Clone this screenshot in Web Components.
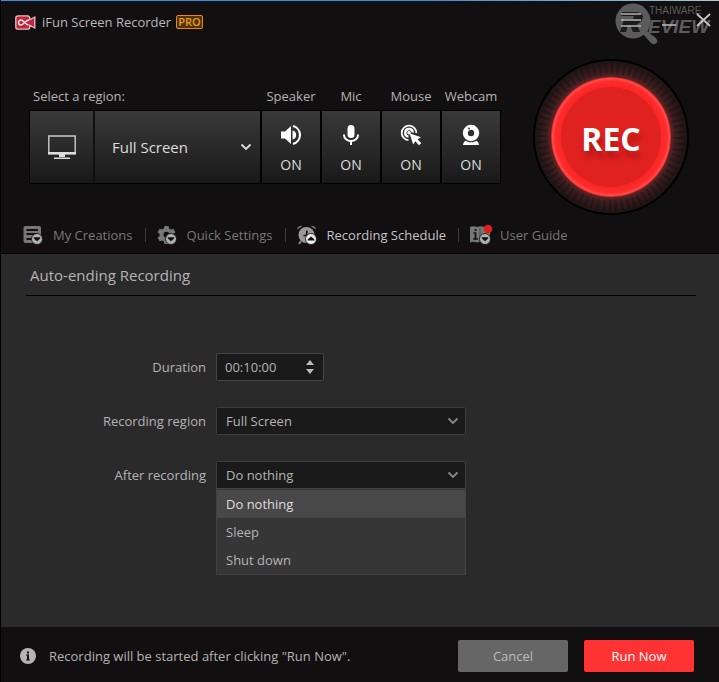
<!DOCTYPE html>
<html lang="en">
<head>
<meta charset="utf-8">
<meta name="viewport" content="width=device-width, initial-scale=1">
<title>iFun Screen Recorder</title>
<style>
  html, body { margin: 0; background: #110f10; }
  body { font: 14px/20px "Open Sans", "Noto Sans", sans-serif; color: #b4b4b4; }
</style>
</head>
<body>
<recorder-app></recorder-app>

<script>
const define = (name, html, setup) => {
  const template = document.createElement('template');
  template.innerHTML = `<style>
    *, *::before, *::after { box-sizing: border-box; }
    :host { box-sizing: border-box; }
    button, select, input { font: inherit; color: inherit; margin: 0; padding: 0; border: 0; background: none; border-radius: 0; }
    select { appearance: none; }
    svg { display: block; flex: none; overflow: visible; }
  </style>` + html;
  customElements.define(name, class extends HTMLElement {
    connectedCallback() {
      if (this.shadowRoot) return;
      this.attachShadow({ mode: 'open' }).append(template.content.cloneNode(true));
      if (setup) setup(this, this.shadowRoot);
    }
  });
};

const badge = (fill, direction) => `<circle cx="14" cy="14" r="5.500" fill="${fill}" stroke="#110f10" stroke-width=".8"/>` +
  (direction === 'up' ? '<path d="M10.500 15.500h7q-.5-2-3.500-4-3 2-3.500 4z" fill="#110f10"/>' : '<path d="M10.500 12.300h7q-.3 2.200-3.500 3.900-3.200-1.700-3.500-3.900z" fill="#110f10"/>');

const icons = {
  speaker: '<svg width="22" height="22" viewBox="0 0 22 22" fill="#fff"><path d="M1 7.500h4L11 2v18l-6-5.500H1zM12.500 6.500v9a4.600 4.600 0 0 0 0-9z"/><path d="M13 2a9.300 9.300 0 0 1 0 18" fill="none" stroke="#fff" stroke-width="2.200"/></svg>',
  mic: '<svg width="22" height="22" viewBox="0 0 22 22"><rect x="7.500" y="1" width="7" height="13" rx="3.500" fill="#fff"/><path d="M4 10.500v.5a7 6 0 0 0 14 0v-.5M11 17v4" fill="none" stroke="#fff" stroke-width="2"/></svg>',
  mouse: '<svg width="22" height="22" viewBox="0 0 22 22"><g fill="none" stroke="#fff"><path d="M8.500 16.200A7.300 7.300 0 1 1 16.300 9" stroke-width="1.800"/><path d="M8.500 12.600A3.800 3.800 0 1 1 12.800 8.500" stroke-width="2.400"/></g><circle cx="9" cy="8.800" r="1.800" fill="#fff"/><path d="M9.500 9.200l11.500 4-3.300 2 3.600 4-2.300 2-3.700-4-2.100 3.200z" fill="#fff"/></svg>',
  webcam: '<svg width="22" height="22" viewBox="0 0 22 22"><circle cx="11" cy="9" r="5.700" fill="none" stroke="#fff" stroke-width="5"/><circle cx="9" cy="4.500" r=".9" fill="#262626"/><path d="M3 21c.2-2.500 1.200-3.600 2.800-4.300 3 2 7.400 2 10.400 0 1.600.7 2.600 1.800 2.800 4.300z" fill="#fff"/></svg>',
  list: `<svg width="20" height="20" viewBox="0 0 20 20"><path d="M2.500 1h13.500q2 0 2 2v13q0 2-2 2H2.500q-2 0-2-2V3q0-2 2-2z" fill="#777"/><path d="M3.500 5h11.500M3.500 9h11.500M3.500 14h5" stroke="#110f10" stroke-width="1.800"/>${badge('#b0b0b0', 'down')}</svg>`,
  gear: `<svg width="20" height="20" viewBox="0 0 20 20"><path d="M7.500 1h4l.6 2.600 1.800 1 2.500-.8 2 3.400-2 1.800v2l2 1.800-2 3.400-2.500-.8-1.800 1-.6 2.600h-4l-.6-2.600-1.800-1-2.500.8-2-3.400L2.600 11V9L.6 7.200l2-3.400 2.500.8 1.800-1z" fill="#777"/><circle cx="9.500" cy="9.800" r="3" fill="#110f10"/>${badge('#b0b0b0', 'down')}</svg>`,
  clock: `<svg width="20" height="20" viewBox="0 0 20 20"><path d="M4 16l-2 3" stroke="#888" stroke-width="2"/><path d="M0 4.500Q.5.800 5.500.8L3 2.500zM13.500.8q5 0 5.500 3.700L16 2.500z" fill="#888"/><circle cx="9.500" cy="10" r="8" fill="#999"/><path d="M9.800 5.500v5H6.500" fill="none" stroke="#110f10" stroke-width="1.600"/>${badge('#ececec', 'up')}</svg>`,
  guide: `<svg width="20" height="20" viewBox="0 0 20 20"><path d="M0 2q3.500-1.500 7 0 3.500-1.500 7 0 3-1.200 6 0v15.500q-3-1-6 0-3.500-1.500-7 0-3.500-1.500-7 0z" fill="#777"/><path d="M3.500 8h2v6M3 14h5M5.500 4v2" fill="none" stroke="#110f10" stroke-width="1.700"/><path d="M10 2.500v14" stroke="#4a4a4a"/><g transform="translate(1 0)">${badge('#b0b0b0', 'down')}</g><circle cx="18" cy="4" r="4.300" fill="#e0201f"/></svg>`
};

const chevron = '<svg class="chevron" width="12" height="8" viewBox="0 0 12 8" fill="none" stroke="currentColor" stroke-width="1.800"><path d="M1.500 1.500L6 6l4.500-4.500"/></svg>';

define('title-bar', `
  <style>
    :host { display: flex; align-items: center; height: 42px; padding: 0 8px 0 14px; position: relative; }
    h1 { margin: 0 5px 0 6px; font-size: 13px; font-weight: 400; line-height: 20px; color: #b8b8b8; }
    .pro { padding: 0 1px; border: 1px solid #f08418; border-radius: 2px; background: #4c3309; color: #f59a14; font-size: 11px; font-weight: 600; line-height: 12px; }
    .tools { display: flex; align-items: center; gap: 21px; margin-left: auto; z-index: 1; }
    .tools button { display: grid; place-items: center; height: 22px; }
    .mark { position: absolute; top: 0; right: 0; pointer-events: none; }
  </style>
  <svg width="21" height="15" viewBox="0 0 21 15"><path d="M3 .8h9.500q2.200 0 2.200 2.400v1.500L19.800 2v11l-5.100-2.700V12q0 2.200-2.200 2.200H3q-2.200 0-2.200-2.200V3Q.8.800 3 .8z" fill="#c92238" stroke="#d8c4c8" stroke-width="1.300"/><path d="M13.500 10C9.500 9.500 9 5 6 5a2.500 2.500 0 0 0 0 5c3 0 4-5 8-5" fill="none" stroke="#eee" stroke-width="1.400"/></svg>
  <h1>iFun Screen Recorder</h1><span class="pro">PRO</span>
  <svg class="mark" width="105" height="44" viewBox="0 0 105 44" opacity=".7" fill="#7c7c7c" font-family="Liberation Sans, sans-serif">
    <circle cx="19" cy="20" r="17.500"/>
    <path d="M29 33l4-3 9 7q3 4-1 6-3 1-5-2z"/>
    <path d="M8 11h16q7 2 4 8-2 3-5 4l3 8h-7l-3-7h-2l-2 7H6l4-13h9l1-3H7z" fill="#222"/>
    <text x="35" y="13" font-size="10">THAIWARE</text>
    <text x="34" y="32" font-size="19" font-weight="700" font-style="italic">EVIEW</text>
  </svg>
  <div class="tools">
    <button type="button" aria-label="Menu"><svg width="20" height="16" viewBox="0 0 20 16" stroke="#b4b4b4" stroke-width="1.600"><path d="M0 0h20M0 6h20M0 12h20"/></svg></button>
    <button type="button" aria-label="Minimize"><svg width="14" height="16" viewBox="0 0 14 16" stroke="#b4b4b4" stroke-width="1.600"><path d="M0 11h14"/></svg></button>
    <button type="button" aria-label="Close"><svg width="14" height="18" viewBox="0 0 14 18" stroke="#c4c4c4" stroke-width="1.800"><path d="M0 1l13 12M13 1L0 13"/></svg></button>
  </div>`);

define('region-picker', `
  <style>
    :host { display: block; }
    label { display: block; height: 20px; margin-top: -4px; padding-left: 4px; font-size: 13px; line-height: 20px; white-space: nowrap; }
    .box { display: flex; height: 74px; margin-top: 4px; border: 1px solid #000; background: linear-gradient(#393939, #191919); }
    .screen { flex: none; display: grid; place-items: center; width: 65px; border-right: 2px solid #101010; }
    .pick { flex: 1; min-width: 0; display: grid; align-items: center; color: #ddd; }
    .pick > * { grid-area: 1 / 1; }
    select { width: 100%; height: 100%; padding-left: 17px; font-size: 15px; }
    .chevron { justify-self: end; margin-right: 8px; pointer-events: none; }
  </style>
  <label for="region">Select a region:</label>
  <div class="box">
    <button class="screen" type="button" aria-label="Choose screen"><svg width="28" height="25" viewBox="0 0 28 25"><path d="M.8 1h26.400v17.500H.8z" fill="none" stroke="#ccc" stroke-width="1.400"/><path d="M0 17h28v2.500H0zM11 19h6v3h-6zM6 22.500h16V24H6z" fill="#ddd"/></svg></button>
    <div class="pick"><select id="region"><option>Full Screen</option></select>${chevron}</div>
  </div>`);

define('toggle-tile', `
  <style>
    :host { display: block; flex: none; width: 60px; }
    label { display: flex; justify-content: center; height: 20px; margin-top: -4px; font-size: 13px; line-height: 20px; white-space: nowrap; }
    button { display: flex; flex-direction: column; align-items: center; gap: 9px; width: 100%; height: 74px; margin-top: 4px; padding-top: 13px; border: 1px solid #000; background: linear-gradient(#393939, #191919); color: #ddd; font-size: 14px; line-height: 20px; }
  </style>
  <label for="toggle"></label>
  <button id="toggle" type="button" aria-pressed="true"><span class="icon"></span><span>ON</span></button>`,
  (host, root) => {
    root.querySelector('label').textContent = host.getAttribute('label');
    root.querySelector('.icon').innerHTML = icons[host.getAttribute('icon')];
  });

define('record-button', `
  <style>
    :host { display: block; flex: none; }
    button { display: grid; place-items: center; border-radius: 50%; }
    button > * { grid-area: 1 / 1; }
    span { padding-top: 4px; color: #fff; font-size: 32px; font-weight: 700; line-height: 40px; text-shadow: 2px 7px 5px rgba(110, 0, 0, .35); }
  </style>
  <button type="button">
    <svg width="156" height="156" viewBox="0 0 156 156">
      <defs>
        <radialGradient id="glow" gradientUnits="userSpaceOnUse" cx="78" cy="78" r="78"><stop offset=".74" stop-color="#682727"/><stop offset=".84" stop-color="#3a1d1e"/><stop offset="1" stop-color="#171213"/></radialGradient>
        <radialGradient id="ring" gradientUnits="userSpaceOnUse" cx="78" cy="78" r="60"><stop offset=".84" stop-color="#fb2625"/><stop offset=".93" stop-color="#fd2d2d"/><stop offset=".975" stop-color="#ff4b4b"/><stop offset="1" stop-color="#d02222"/></radialGradient>
      </defs>
      <circle cx="78" cy="78" r="77" fill="url(#glow)" stroke="#000" stroke-width="2"/>
      <circle cx="78" cy="78" r="68.500" fill="none" stroke="#000" stroke-opacity=".22" stroke-width="11" pathLength="288" stroke-dasharray="1.400 2.600"/>
      <circle cx="78" cy="78" r="60" fill="url(#ring)"/>
      <circle cx="78" cy="78" r="50" fill="#df2220"/>
    </svg>
    <span>REC</span>
  </button>`);

define('nav-tab', `
  <style>
    :host { display: flex; align-items: center; }
    :host(:not(:first-child))::before { content: ""; width: 1px; height: 14px; margin: 0 11px 0 12px; background: #3c3c3c; }
    button { display: flex; align-items: center; gap: 10px; color: #777; font-size: 13px; line-height: 20px; white-space: nowrap; }
    :host([selected]) button { color: #c4c4c4; }
  </style>
  <button type="button"><span class="icon"></span><slot></slot></button>`,
  (host, root) => { root.querySelector('.icon').innerHTML = icons[host.getAttribute('icon')]; });

define('duration-field', `
  <style>
    :host { display: contents; }
    label { text-align: right; line-height: 28px; }
    .box { display: flex; align-items: center; width: 108px; height: 28px; padding: 0 9px 0 8px; border: 1px solid #454545; border-radius: 2px; background: #1a1a1a; }
    input { flex: 1; min-width: 0; width: 0; outline: 0; }
    .steps { display: grid; gap: 4px; }
    .steps button { display: block; }
  </style>
  <label for="duration">Duration</label>
  <div class="box">
    <input id="duration" type="text" value="00:10:00">
    <div class="steps">
      <button type="button" aria-label="Increase"><svg width="8" height="6" viewBox="0 0 8 6" fill="#bbb"><path d="M4 1l4 5H0z"/></svg></button>
      <button type="button" aria-label="Decrease"><svg width="8" height="6" viewBox="0 0 8 6" fill="#bbb"><path d="M0 0h8L4 5z"/></svg></button>
    </div>
  </div>`);

define('select-field', `
  <style>
    :host { display: contents; }
    label { text-align: right; line-height: 28px; white-space: nowrap; }
    .box { position: relative; display: grid; align-items: center; height: 28px; border: 1px solid #3c3c3c; border-radius: 2px; background: #1a1a1a; }
    .box > select, .box > .chevron { grid-area: 1 / 1; }
    select { width: 100%; height: 26px; padding-left: 9px; }
    .chevron { justify-self: end; margin-right: 6px; color: #888; pointer-events: none; }
    ul { position: absolute; top: 100%; left: -1px; right: -1px; margin: 0; padding: 1px 0 0; border: 1px solid #424242; background: #363636; list-style: none; }
    ul[hidden] { display: none; }
    li { padding: 0 9px; line-height: 28px; }
    li[aria-selected="true"] { background: #484848; color: #ddd; }
  </style>
  <label for="field"></label>
  <div class="box"><select id="field"></select>${chevron}<ul role="listbox" hidden></ul></div>`,
  (host, root) => {
    const options = host.getAttribute('options').split('|');
    const select = root.querySelector('select');
    const list = root.querySelector('ul');
    root.querySelector('label').textContent = host.getAttribute('label');
    options.forEach(text => select.add(new Option(text)));
    if (!host.hasAttribute('open')) return;
    list.hidden = false;
    options.forEach((text, i) => {
      const item = document.createElement('li');
      item.setAttribute('role', 'option');
      item.setAttribute('aria-selected', String(i === 0));
      item.textContent = text;
      item.addEventListener('click', () => {
        select.selectedIndex = i;
        list.querySelectorAll('li').forEach(li => li.setAttribute('aria-selected', String(li === item)));
      });
      list.append(item);
    });
  });

define('schedule-panel', `
  <style>
    :host { display: block; flex: 1; padding: 0 23px 60px 25px; background: #2a2a2a; font-size: 13px; }
    h2 { margin: 0; padding: 11px 4px 10px; border-bottom: 1px solid #000; font-size: 15px; font-weight: 400; line-height: 20px; }
    form { display: grid; grid-template-columns: minmax(120px, 180px) minmax(0, 250px); gap: 26px 10px; margin-top: 57px; }
  </style>
  <h2>Auto-ending Recording</h2>
  <form>
    <duration-field></duration-field>
    <select-field label="Recording region" options="Full Screen"></select-field>
    <select-field label="After recording" options="Do nothing|Sleep|Shut down" open></select-field>
  </form>`);

define('action-bar', `
  <style>
    :host { display: flex; align-items: center; gap: 16px; padding: 13px 25px 10px 19px; font-size: 13px; }
    p { display: flex; align-items: center; gap: 13px; margin: 0 auto 0 0; }
    button { width: 110px; height: 32px; border-radius: 2px; background: #666; color: #bdbdbd; }
    .run { background: #ff3333; color: #fff; }
  </style>
  <p><svg width="16" height="16" viewBox="0 0 16 16"><circle cx="8" cy="8" r="8" fill="#b4b4b4"/><path d="M7 3.500h2v2H7zM6 6.500h3v5h1v1H6v-1h1v-4H6z" fill="#110f10"/></svg><span>Recording will be started after clicking "Run Now".</span></p>
  <button type="button">Cancel</button>
  <button type="button" class="run">Run Now</button>`);

define('recorder-app', `
  <style>
    :host { display: flex; flex-direction: column; min-height: 100vh; border-left: 1px solid #000; }
    .edge { height: 1px; background: linear-gradient(90deg, #3a8fdc 60%, #a9c9d0); }
    header { border-bottom: 1px solid #000; }
    .capture { display: flex; align-items: center; gap: 32px; padding: 16px 30px 2px 28px; }
    .controls { flex: 1; min-width: 0; display: flex; }
    region-picker { flex: 1; min-width: 0; }
    nav { display: flex; align-items: center; height: 36px; padding-left: 22px; }
  </style>
  <div class="edge"></div>
  <header>
    <title-bar></title-bar>
    <div class="capture">
      <div class="controls">
        <region-picker></region-picker>
        <toggle-tile label="Speaker" icon="speaker"></toggle-tile>
        <toggle-tile label="Mic" icon="mic"></toggle-tile>
        <toggle-tile label="Mouse" icon="mouse"></toggle-tile>
        <toggle-tile label="Webcam" icon="webcam"></toggle-tile>
      </div>
      <record-button></record-button>
    </div>
    <nav>
      <nav-tab icon="list">My Creations</nav-tab>
      <nav-tab icon="gear">Quick Settings</nav-tab>
      <nav-tab icon="clock" selected>Recording Schedule</nav-tab>
      <nav-tab icon="guide">User Guide</nav-tab>
    </nav>
  </header>
  <schedule-panel></schedule-panel>
  <action-bar></action-bar>`);
</script>
</body>
</html>
